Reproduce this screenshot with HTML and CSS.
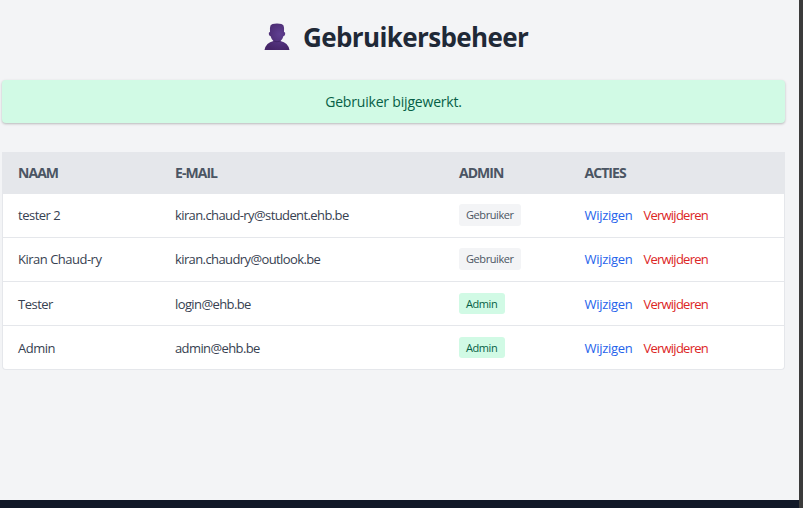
FILE: index.html
```html
<!DOCTYPE html>
<html lang="nl">
<head>
<meta charset="utf-8">
<title>Gebruikersbeheer</title>
<link rel="stylesheet" href="styles.css">
</head>
<body>
<div class="view">
  <main class="page">
    <h1 class="title">
      <svg class="person" viewBox="0 0 26 28" aria-hidden="true">
        <defs><radialGradient id="skin" cx=".6" cy=".4" r=".65"><stop offset="0" stop-color="#5f3f91"/><stop offset="1" stop-color="#452568"/></radialGradient></defs>
        <path fill="url(#skin)" d="M6.500 2.500Q7.500.500 13 .500T19.500 2.500Q20.500 5 20 9Q21.500 9 21.200 11Q20.800 13.300 19.500 13Q18.500 16.500 16.500 18Q24 19.500 25.500 27H.500Q2 19.500 9.500 18Q7.500 16.500 6.500 13Q5.200 13.300 4.800 11Q4.500 9 6 9Q5.500 5 6.500 2.500Z"/>
        <path d="M9.500 18Q13 19.500 16.500 18" fill="none" stroke="#39205b" stroke-width=".7"/>
      </svg>
      <span class="title-text">Gebruikersbeheer</span>
    </h1>
    <div class="alert">Gebruiker bijgewerkt.</div>
    <div class="card">
      <div class="row head"><span>NAAM</span><span>E-MAIL</span><span>ADMIN</span><span>ACTIES</span></div>
      <div class="row"><span>tester 2</span><span class="mail">kiran.chaud-ry@student.ehb.be</span><span><b class="badge">Gebruiker</b></span><span class="actions"><a class="edit">Wijzigen</a><a class="delete">Verwijderen</a></span></div>
      <div class="row"><span>Kiran Chaud-ry</span><span class="mail">kiran.chaudry@outlook.be</span><span><b class="badge">Gebruiker</b></span><span class="actions"><a class="edit">Wijzigen</a><a class="delete">Verwijderen</a></span></div>
      <div class="row lower"><span>Tester</span><span class="mail">login@ehb.be</span><span><b class="badge admin">Admin</b></span><span class="actions"><a class="edit">Wijzigen</a><a class="delete">Verwijderen</a></span></div>
      <div class="row lower"><span>Admin</span><span class="mail">admin@ehb.be</span><span><b class="badge admin">Admin</b></span><span class="actions"><a class="edit">Wijzigen</a><a class="delete">Verwijderen</a></span></div>
    </div>
  </main>
  <footer class="footer"></footer>
</div>
<div class="edge"></div>
</body>
</html>
```
FILE: styles.css
```css
* { box-sizing: border-box; }
body {
  margin: 0;
  height: 508px;
  overflow: hidden;
  display: flex;
  background: #f3f4f6;
  color: #374151;
  font: 13px/20px "Open Sans", "Noto Sans", sans-serif;
}
.view { flex: 1; display: flex; flex-direction: column; }
.page { flex: 1; padding: 17px 14px 0 2px; }
.footer { height: 8px; background: #111827; }
.edge { width: 4px; background: #3b3b3b; }
.title {
  margin: 0 0 23px;
  height: 40px;
  padding-left: 262px;
  display: flex;
  align-items: center;
  gap: 13px;
  color: #1f2937;
  font-size: 26px;
  line-height: 40px;
  font-weight: 700;
  letter-spacing: -0.62px;
  white-space: nowrap;
}
.title-text { margin-top: -1px; }
.person { width: 26px; height: 28px; }
.alert {
  height: 43px;
  margin-bottom: 29px;
  border-radius: 4px;
  background: #d1fae5;
  color: #065f46;
  font-size: 14px;
  line-height: 44px;
  letter-spacing: -0.19px;
  text-align: center;
  box-shadow: 0 1px 3px rgba(0, 0, 0, .15), 0 1px 2px rgba(0, 0, 0, .1);
}
.card {
  width: 783px;
  border: 1px solid #e5e7eb;
  border-top: 0;
  border-radius: 0 0 4px 4px;
  background: #fff;
}
.row {
  height: 44px;
  padding: 0 0 2px 15px;
  display: grid;
  grid-template-columns: 157px 284px 125.5px 1fr;
  align-items: center;
  border-bottom: 1px solid #e5e7eb;
  letter-spacing: -0.5px;
  white-space: nowrap;
}
.lower { padding-bottom: 0; }
.row:last-child { height: 43px; border-bottom: 0; }
.head {
  height: 42px;
  padding-bottom: 0;
  border: 0;
  background: #e5e7eb;
  color: #4b5563;
  font-size: 14px;
  font-weight: 700;
  letter-spacing: -0.95px;
}
.mail { letter-spacing: -0.6px; }
.badge {
  display: block;
  width: max-content;
  height: 22px;
  padding: 0 7px;
  border-radius: 3px;
  background: #f3f4f6;
  color: #4b5563;
  font-size: 11px;
  font-weight: 400;
  line-height: 22px;
  letter-spacing: -0.42px;
}
.row .badge { padding-right: 7.4px; }
.lower .badge { height: 21px; margin-top: -1px; line-height: 21px; }
.admin { background: #d1fae5; color: #065f46; }
.actions { display: flex; gap: 11px; }
.edit { color: #2563eb; letter-spacing: -0.3px; }
.delete { color: #dc2626; letter-spacing: -0.75px; }
```
